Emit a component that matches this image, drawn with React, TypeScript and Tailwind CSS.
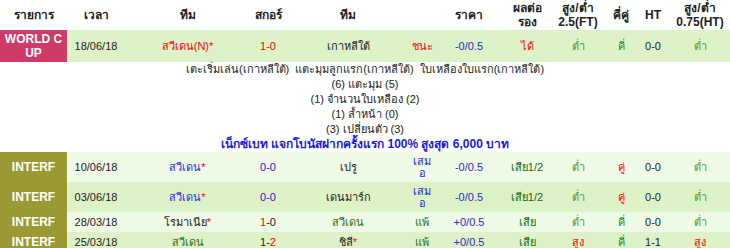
import React from "react"

type Row = {
  league: string
  tone: "cup" | "friendly"
  bg: string
  h: string
  date: string
  home: React.ReactNode
  score: React.ReactNode
  away: React.ReactNode
  result: React.ReactNode
  odds: string
  ah: React.ReactNode
  ou: React.ReactNode
  oe: React.ReactNode
  ht: string
  ouHt: React.ReactNode
}

const star = <span className="text-[#ff0000]">*</span>
const low = <span className="text-[#4f9a2e]">ต่ำ</span>
const high = <span className="text-[#ff0000]">สูง</span>
const odd = <span className="text-[#1f8a1f]">คี่</span>
const even = <span className="text-[#ff0000]">คู่</span>
const draw = (
  <span className="text-[#1f1fe0]">
    เสม
    <br />อ
  </span>
)

const rows: Row[] = [
  {
    league: "WORLD C UP",
    tone: "cup",
    bg: "bg-[#def2c8]",
    h: "h-[32px]",
    date: "18/06/18",
    home: <span className="text-[#ff0000]">สวีเดน(N)*</span>,
    score: <span className="text-[#ff0000]">1-0</span>,
    away: <span className="text-[#222]">เกาหลีใต้</span>,
    result: <span className="text-[#ff0000]">ชนะ</span>,
    odds: "-0/0.5",
    ah: <span className="text-[#ff0000]">ได้</span>,
    ou: low,
    oe: odd,
    ht: "0-0",
    ouHt: low,
  },
  {
    league: "INTERF",
    tone: "friendly",
    bg: "bg-[#eef9e6]",
    h: "h-[30px]",
    date: "10/06/18",
    home: (
      <span className="text-[#2a2ae0]">
        สวีเดน{star}
      </span>
    ),
    score: <span className="text-[#3a10c8]">0-0</span>,
    away: <span className="text-[#222]">เปรู</span>,
    result: draw,
    odds: "-0/0.5",
    ah: <span className="text-[#116b11]">เสีย1/2</span>,
    ou: low,
    oe: even,
    ht: "0-0",
    ouHt: low,
  },
  {
    league: "INTERF",
    tone: "friendly",
    bg: "bg-[#def2c8]",
    h: "h-[30px]",
    date: "03/06/18",
    home: (
      <span className="text-[#2a2ae0]">
        สวีเดน{star}
      </span>
    ),
    score: <span className="text-[#3a10c8]">0-0</span>,
    away: <span className="text-[#222]">เดนมาร์ก</span>,
    result: draw,
    odds: "-0/0.5",
    ah: <span className="text-[#116b11]">เสีย1/2</span>,
    ou: low,
    oe: even,
    ht: "0-0",
    ouHt: low,
  },
  {
    league: "INTERF",
    tone: "friendly",
    bg: "bg-[#eef9e6]",
    h: "h-[20px]",
    date: "28/03/18",
    home: (
      <span className="text-[#222]">
        โรมาเนีย{star}
      </span>
    ),
    score: (
      <span className="text-[#222]">
        <span className="text-[#ff0000]">1</span>-0
      </span>
    ),
    away: <span className="text-[#2e6e10]">สวีเดน</span>,
    result: <span className="text-[#2e6e10]">แพ้</span>,
    odds: "+0/0.5",
    ah: <span className="text-[#116b11]">เสีย</span>,
    ou: low,
    oe: odd,
    ht: "0-0",
    ouHt: low,
  },
  {
    league: "INTERF",
    tone: "friendly",
    bg: "bg-[#def2c8]",
    h: "h-[20px]",
    date: "25/03/18",
    home: <span className="text-[#2e6e10]">สวีเดน</span>,
    score: (
      <span className="text-[#222]">
        1-<span className="text-[#ff0000]">2</span>
      </span>
    ),
    away: (
      <span className="text-[#222]">
        ชิลี{star}
      </span>
    ),
    result: <span className="text-[#2e6e10]">แพ้</span>,
    odds: "+0/0.5",
    ah: <span className="text-[#116b11]">เสีย</span>,
    ou: high,
    oe: odd,
    ht: "1-1",
    ouHt: high,
  },
]

const detailLines = [
  "เตะเริ่มเล่น(เกาหลีใต้)  แตะมุมลูกแรก(เกาหลีใต้)  ใบเหลืองใบแรก(เกาหลีใต้)",
  "(6) แตะมุม (5)",
  "(1) จำนวนใบเหลือง (2)",
  "(1) ล้ำหน้า (0)",
  "(3) เปลี่ยนตัว (3)",
]

const MatchRow = ({ r }: { r: Row }) => (
  <tr className={`${r.bg} ${r.h} text-center text-[11px] leading-[12px]`}>
    <td
      className={`${
        r.tone === "cup" ? "bg-[#cf3a69]" : "bg-[#9b9933]"
      } text-white font-bold text-[12px] leading-[14px] px-1`}
    >
      {r.league === "WORLD C UP" ? (
        <>
          WORLD C
          <br />
          UP
        </>
      ) : (
        r.league
      )}
    </td>
    <td className="text-[#222]">{r.date}</td>
    <td>{r.home}</td>
    <td>{r.score}</td>
    <td>{r.away}</td>
    <td>{r.result}</td>
    <td className="text-[#2a2ad0]">{r.odds}</td>
    <td>{r.ah}</td>
    <td>{r.ou}</td>
    <td>{r.oe}</td>
    <td className="text-[#222]">{r.ht}</td>
    <td>{r.ouHt}</td>
  </tr>
)

const App = () => {
  return (
    <div
      className="w-[730px] h-[248px] overflow-hidden bg-white"
      style={{ fontFamily: '"Liberation Sans", Tahoma, sans-serif' }}
    >
      <table className="w-[730px] table-fixed border-collapse">
        <colgroup>
          <col className="w-[67px]" />
          <col className="w-[58px]" />
          <col className="w-[125px]" />
          <col className="w-[36px]" />
          <col className="w-[124px]" />
          <col className="w-[24px]" />
          <col className="w-[70px]" />
          <col className="w-[46px]" />
          <col className="w-[56px]" />
          <col className="w-[30px]" />
          <col className="w-[34px]" />
          <col className="w-[60px]" />
        </colgroup>
        <thead>
          <tr className="h-[30px] text-center text-[12px] leading-[14px] font-bold text-[#222]">
            <th>รายการ</th>
            <th>เวลา</th>
            <th>ทีม</th>
            <th>สกอร์</th>
            <th>ทีม</th>
            <th></th>
            <th>ราคา</th>
            <th>
              ผลต่อ
              <br />
              รอง
            </th>
            <th>
              สูง/ต่ำ
              <br />
              2.5(FT)
            </th>
            <th>คี่คู่</th>
            <th>HT</th>
            <th>
              สูง/ต่ำ
              <br />
              0.75(HT)
            </th>
          </tr>
        </thead>
        <tbody>
          <MatchRow r={rows[0]} />
          <tr className="h-[90px] bg-white">
            <td colSpan={12} className="text-center text-[11px] leading-[15px] text-[#222] whitespace-pre">
              {detailLines.map((l) => (
                <div key={l}>{l}</div>
              ))}
              <div className="font-bold text-[12px] text-[#1a1ae6]">
                เน็กซ์เบท แจกโบนัสฝากครั้งแรก 100% สูงสุด 6,000 บาท
              </div>
            </td>
          </tr>
          {rows.slice(1).map((r, i) => (
            <MatchRow key={i} r={r} />
          ))}
        </tbody>
      </table>
    </div>
  )
}

export default App
